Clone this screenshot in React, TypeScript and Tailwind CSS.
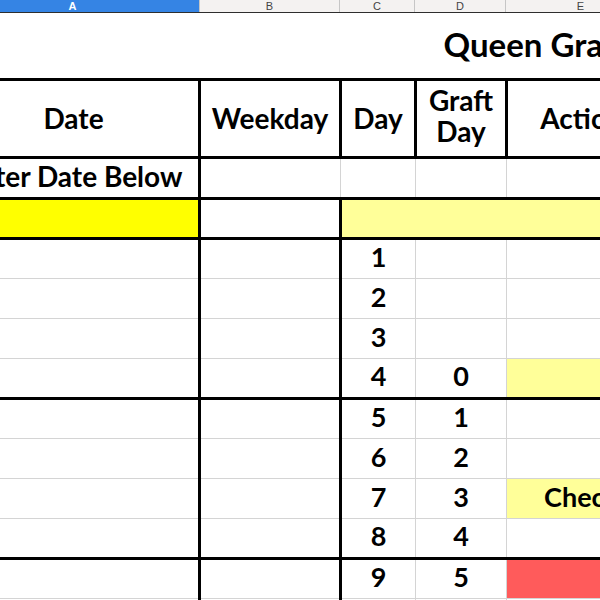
import React from "react";

const thin = "border border-[#d4d4d4]";

const rows = [
  { day: 1, graft: "", fill: "" },
  { day: 2, graft: "", fill: "" },
  { day: 3, graft: "", fill: "" },
  { day: 4, graft: "0", fill: "bg-[#ffff99]" },
  { day: 5, graft: "1", fill: "" },
  { day: 6, graft: "2", fill: "" },
  { day: 7, graft: "3", fill: "bg-[#ffff99]", text: "Check" },
  { day: 8, graft: "4", fill: "" },
  { day: 9, graft: "5", fill: "bg-[#ff5b5b]" },
  { day: 10, graft: "6", fill: "" },
];

const App = () => {
  return (
    <div className="w-[600px] h-[600px] overflow-hidden bg-white font-['Lato','Liberation_Sans',sans-serif] text-black">
      <div className="ml-[-54px] w-[1000px]">
        {/* Column headers */}
        <div className="flex h-[13px] bg-[#f4f2f1] border-b border-[#2e2e2e] text-[11px] leading-[12px] font-['Liberation_Sans',sans-serif]">
          <div className="w-[253px] bg-[#3584e4] text-white font-bold text-center">A</div>
          <div className="w-[140px] border-l border-[#c6c6c6] text-[#444] text-center">B</div>
          <div className="w-[75px] border-l border-[#c6c6c6] text-[#444] text-center">C</div>
          <div className="w-[91px] border-l border-[#c6c6c6] text-[#444] text-center">D</div>
          <div className="w-[150px] border-l border-[#c6c6c6] text-[#444] text-center">E</div>
          <div className="flex-1 border-l border-[#c6c6c6]" />
        </div>

        <table className="w-[709px] table-fixed border-collapse font-bold">
          <colgroup>
            <col className="w-[252px]" />
            <col className="w-[141px]" />
            <col className="w-[75px]" />
            <col className="w-[91px]" />
            <col className="w-[150px]" />
          </colgroup>
          <tbody>
            <tr className="h-[66px]">
              <td colSpan={5} className="border-b-[3px] border-black p-0">
                <div className="pl-[496px] whitespace-nowrap text-[33px] leading-none pb-[2px]">
                  Queen Grafting Calendar
                </div>
              </td>
            </tr>
            <tr className="h-[78px] text-[28px] leading-[31px] text-center">
              <td className="border-[3px] border-black p-0">Date</td>
              <td className="border-[3px] border-black p-0">Weekday</td>
              <td className="border-[3px] border-black p-0">Day</td>
              <td className="border-[3px] border-black p-0 pb-[4px]">
                Graft
                <br />
                Day
              </td>
              <td className="border-[3px] border-black p-0 whitespace-nowrap">Action</td>
            </tr>
            <tr className="h-[41px] text-[28px] leading-none text-center">
              <td className={`${thin} border-r-[3px] border-r-black border-b-[3px] border-b-black p-0 pb-[3px] whitespace-nowrap`}>
                Enter Date Below
              </td>
              <td className={`${thin} border-b-[3px] border-b-black p-0`} />
              <td className={`${thin} border-b-[3px] border-b-black p-0`} />
              <td className={`${thin} border-b-[3px] border-b-black p-0`} />
              <td className={`${thin} border-b-[3px] border-b-black p-0`} />
            </tr>
            <tr className="h-[40px]">
              <td className="border-[3px] border-black bg-[#ffff00] p-0" />
              <td className="border-[3px] border-black p-0" />
              <td colSpan={3} className="border-[3px] border-black bg-[#ffff99] p-0" />
            </tr>
            {rows.map((r, i) => {
              const last = i % 4 === 3;
              const b = last ? "border-b-[3px] border-b-black" : "";
              return (
                <tr key={r.day} className="h-[40px] text-[27px] text-center leading-none">
                  <td className={`${thin} ${b} border-r-[3px] border-r-black p-0`} />
                  <td className={`${thin} ${b} border-r-[3px] border-r-black p-0`} />
                  <td className={`${thin} ${b} p-0 pb-[4px]`}>{r.day}</td>
                  <td className={`${thin} ${b} p-0 pb-[4px]`}>{r.graft}</td>
                  <td className={`${thin} ${b} ${r.fill} p-0 pb-[4px] whitespace-nowrap`}>{r.text ?? ""}</td>
                </tr>
              );
            })}
          </tbody>
        </table>
      </div>
    </div>
  );
};

export default App;
